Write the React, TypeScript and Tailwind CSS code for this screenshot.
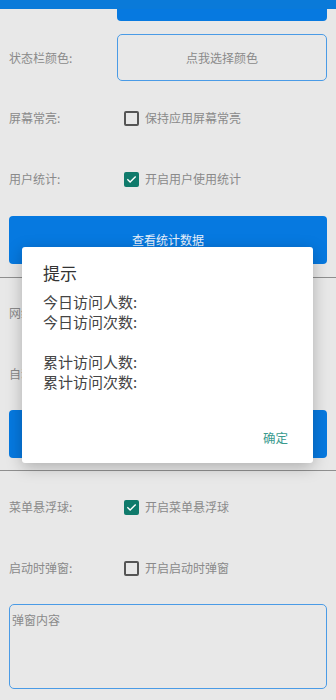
import React from "react";

const font = { fontFamily: '"Noto Sans CJK SC", "Noto Sans", sans-serif' };

function Box({ checked }: { checked: boolean }) {
  if (checked) {
    return (
      <div className="w-[15px] h-[15px] rounded-[2px] bg-[#0f7a6b] flex items-center justify-center shrink-0">
        <svg width="11" height="11" viewBox="0 0 24 24" fill="none">
          <path d="M4 12.5l5 5L20 6.5" stroke="white" strokeWidth="3" strokeLinecap="square" />
        </svg>
      </div>
    );
  }
  return <div className="w-[15px] h-[15px] rounded-[2px] border-2 border-[#555] shrink-0" />;
}

function CheckRow({ label, text, checked, mt }: { label: string; text: string; checked: boolean; mt: string }) {
  return (
    <div className={`flex items-center h-[40px] ${mt}`}>
      <div className="w-[124px] pl-[9px] text-[12px] text-[#8a8a8a]">{label}</div>
      <Box checked={checked} />
      <div className="ml-[6px] text-[12px] text-[#8a8a8a]">{text}</div>
    </div>
  );
}

function HiddenRow({ label, mt }: { label: string; mt: string }) {
  return (
    <div className={`flex items-center h-[40px] ${mt}`}>
      <div className="ml-[9px] w-[14px] overflow-hidden whitespace-nowrap text-[12px] text-[#8a8a8a]">{label}</div>
    </div>
  );
}

export default function App() {
  return (
    <div className="relative w-[336px] h-[700px] overflow-hidden bg-[#e8e8e8]" style={font}>
      <div className="h-[9px] bg-[#0a7ad9]" />
      <div className="ml-[117px] mr-[9px] h-[12px] bg-[#0679e0] rounded-b-[4px]" />

      <div className="flex items-center mt-[13px]">
        <div className="w-[117px] pl-[9px] text-[12px] text-[#8a8a8a]">状态栏颜色:</div>
        <div className="flex-1 mr-[9px] h-[47px] rounded-[5px] border-[1.5px] border-[#4a9be6] flex items-center justify-center text-[12px] text-[#8a8a8a]">
          点我选择颜色
        </div>
      </div>

      <CheckRow label="屏幕常亮:" text="保持应用屏幕常亮" checked={false} mt="mt-[17px]" />
      <CheckRow label="用户统计:" text="开启用户使用统计" checked={true} mt="mt-[21px]" />

      <div className="mx-[9px] mt-[17px] h-[48px] rounded-[4px] bg-[#0679e0] flex items-center justify-center text-[12px] text-[#e6f0fb]">
        查看统计数据
      </div>

      <div className="mt-[13px] h-px bg-[#8f8f8f]" />

      <HiddenRow label="网络检测:" mt="mt-[15px]" />
      <HiddenRow label="自动更新:" mt="mt-[21px]" />

      <div className="mx-[9px] mt-[16px] h-[48px] rounded-[4px] bg-[#0679e0]" />

      <div className="mt-[12px] h-px bg-[#8f8f8f]" />

      <CheckRow label="菜单悬浮球:" text="开启菜单悬浮球" checked={true} mt="mt-[16px]" />
      <CheckRow label="启动时弹窗:" text="开启启动时弹窗" checked={false} mt="mt-[21px]" />

      <div className="mx-[9px] mt-[16px] h-[85px] rounded-[5px] border-[1.5px] border-[#4a9be6] px-[2px] pt-[6px] text-[12px] text-[#8a8a8a]">
        弹窗内容
      </div>

      <div className="absolute left-[22px] top-[247px] w-[291px] h-[216px] bg-white rounded-[3px] shadow-[0_4px_16px_rgba(0,0,0,0.25)]">
        <div className="pl-[21px] pt-[14px] text-[17px] leading-[24px] text-[#333]">提示</div>
        <div className="pl-[21px] mt-[7px] text-[15px] leading-[20px] text-[#444] whitespace-pre">
          {"今日访问人数:\n今日访问次数:\n\n累计访问人数:\n累计访问次数:"}
        </div>
        <div className="absolute right-[25px] top-[182px] text-[12.5px] text-[#3a9a8e]">确定</div>
      </div>
    </div>
  );
}
